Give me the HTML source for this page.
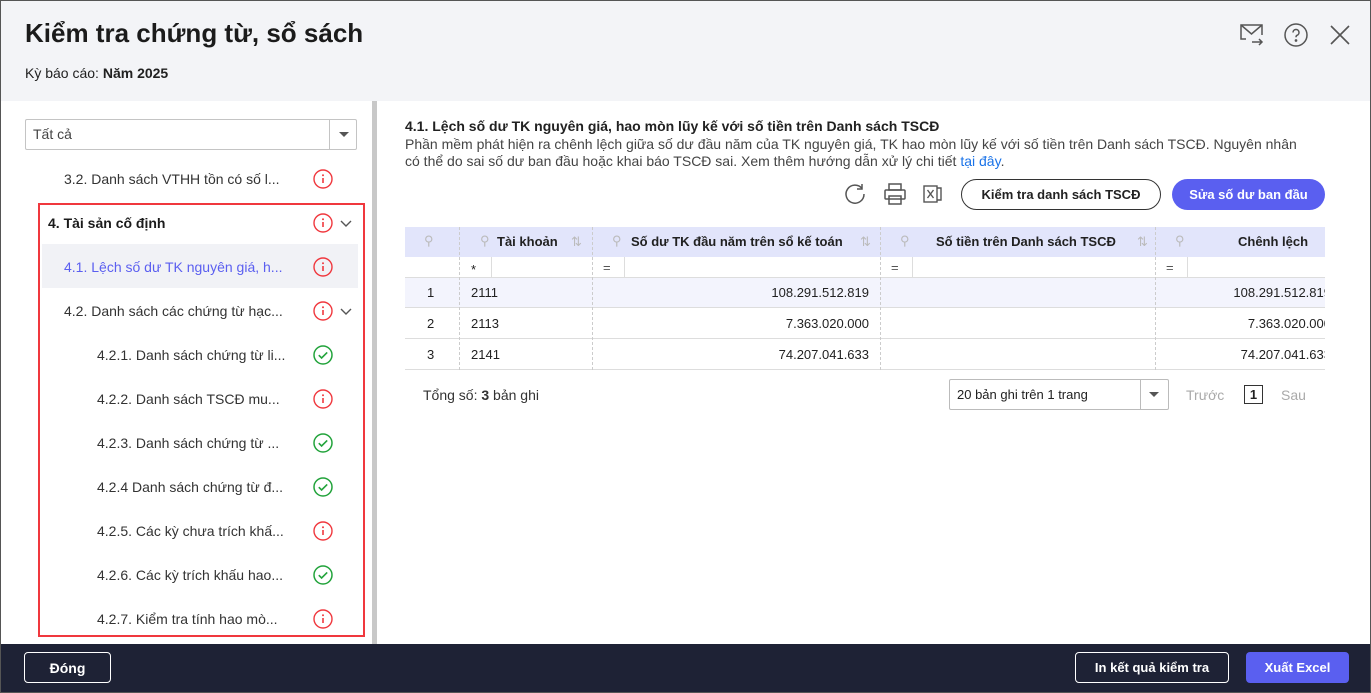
<!DOCTYPE html>
<html><head><meta charset="utf-8"><style>
*{box-sizing:border-box;margin:0;padding:0}
body{width:1371px;height:693px;overflow:hidden;font-family:"Liberation Sans",sans-serif;color:#212121;background:#fff;position:relative}
.hdr{position:absolute;left:0;top:0;width:1371px;height:101px;background:#f3f4f7}
.title{position:absolute;left:25px;top:18px;font-size:26px;font-weight:bold;color:#1b1b1b}
.sub{position:absolute;left:25px;top:65px;font-size:14px}
.foot{position:absolute;left:0;top:644px;width:1371px;height:49px;background:#1e2235}
.btn{position:absolute;border-radius:4px;font-size:14px;font-weight:bold;display:flex;align-items:center;justify-content:center}
.ab{position:absolute}
.item{position:absolute;font-size:14px;color:#333;white-space:nowrap}
.ic{position:absolute;width:20px;height:20px}
.cell{position:absolute;font-size:13px}
</style></head><body>
<div class="hdr"></div>
<div class="title">Kiểm tra chứng từ, sổ sách</div>
<div class="sub">Kỳ báo cáo: <b>Năm 2025</b></div>
<svg class="ab" style="left:1239px;top:23px" width="26" height="24" viewBox="0 0 26 24" fill="none" stroke="#555" stroke-width="1.5"><path d="M7 16H2V2h21v10"/><path d="M2 2l10.5 9L23 2"/><path d="M13 19h10M20 16l3 3-3 3"/></svg>
<svg class="ab" style="left:1284px;top:23px" width="24" height="24" viewBox="0 0 24 24" fill="none" stroke="#555" stroke-width="1.5"><circle cx="12" cy="12" r="11"/><path d="M9 9.5a3 3 0 1 1 4 2.8c-.8.4-1 1-1 2"/><circle cx="12" cy="17.5" r=".6" fill="#555"/></svg>
<svg class="ab" style="left:1330px;top:25px" width="20" height="20" viewBox="0 0 20 20" stroke="#555" stroke-width="1.6"><path d="M1 1l18 18M19 1L1 19"/></svg>

<div class="ab" style="left:372px;top:101px;width:5px;height:543px;background:#c8c8c8"></div>
<div class="ab" style="left:25px;top:119px;width:332px;height:31px;border:1px solid #c4c4c4;border-radius:2px"></div>
<div class="ab" style="left:329px;top:120px;width:1px;height:29px;background:#c4c4c4"></div>
<div class="item" style="left:33px;top:126px;color:#444">Tất cả</div>
<div class="ab" style="left:339px;top:132px;width:0;height:0;border-left:5px solid transparent;border-right:5px solid transparent;border-top:5px solid #555"></div>

<div class="ab" style="left:38px;top:203px;width:327px;height:434px;border:2px solid #f0383e"></div>
<div class="ab" style="left:42px;top:244px;width:316px;height:44px;background:#f1f2f6"></div>

<div class="item" style="left:64px;top:171px">3.2. Danh sách VTHH tồn có số l...</div>
<div class="item" style="left:48px;top:215px;font-weight:bold;color:#1b1b1b">4. Tài sản cố định</div>
<div class="item" style="left:64px;top:259px;color:#5b5ff0">4.1. Lệch số dư TK nguyên giá, h...</div>
<div class="item" style="left:64px;top:303px">4.2. Danh sách các chứng từ hạc...</div>
<div class="item" style="left:97px;top:347px">4.2.1. Danh sách chứng từ li...</div>
<div class="item" style="left:97px;top:391px">4.2.2. Danh sách TSCĐ mu...</div>
<div class="item" style="left:97px;top:435px">4.2.3. Danh sách chứng từ ...</div>
<div class="item" style="left:97px;top:479px">4.2.4 Danh sách chứng từ đ...</div>
<div class="item" style="left:97px;top:523px">4.2.5. Các kỳ chưa trích khấ...</div>
<div class="item" style="left:97px;top:567px">4.2.6. Các kỳ trích khấu hao...</div>
<div class="item" style="left:97px;top:611px">4.2.7. Kiểm tra tính hao mò...</div>

<svg width="0" height="0" style="position:absolute"><defs>
<g id="r"><circle cx="10" cy="10" r="9" fill="none" stroke="#f0383e" stroke-width="1.4"/><path d="M10 9v5" stroke="#f0383e" stroke-width="1.6"/><circle cx="10" cy="6.3" r="1" fill="#f0383e"/></g>
<g id="g"><circle cx="10" cy="10" r="9" fill="none" stroke="#22a33b" stroke-width="1.5"/><path d="M5.8 10.2l2.8 2.8 5.6-5.6" fill="none" stroke="#22a33b" stroke-width="1.6"/></g>
<g id="v"><path d="M1 1l5 5 5-5" fill="none" stroke="#555" stroke-width="1.4"/></g>
</defs></svg>
<svg class="ic" style="left:313px;top:169px"><use href="#r"/></svg>
<svg class="ic" style="left:313px;top:213px"><use href="#r"/></svg>
<svg class="ab" style="left:340px;top:220px" width="12" height="8"><use href="#v"/></svg>
<svg class="ic" style="left:313px;top:257px"><use href="#r"/></svg>
<svg class="ic" style="left:313px;top:301px"><use href="#r"/></svg>
<svg class="ab" style="left:340px;top:308px" width="12" height="8"><use href="#v"/></svg>
<svg class="ic" style="left:313px;top:345px"><use href="#g"/></svg>
<svg class="ic" style="left:313px;top:389px"><use href="#r"/></svg>
<svg class="ic" style="left:313px;top:433px"><use href="#g"/></svg>
<svg class="ic" style="left:313px;top:477px"><use href="#g"/></svg>
<svg class="ic" style="left:313px;top:521px"><use href="#r"/></svg>
<svg class="ic" style="left:313px;top:565px"><use href="#g"/></svg>
<svg class="ic" style="left:313px;top:609px"><use href="#r"/></svg>

<div class="ab" style="left:405px;top:118px;font-size:14px;font-weight:bold">4.1. Lệch số dư TK nguyên giá, hao mòn lũy kế với số tiền trên Danh sách TSCĐ</div>
<div class="ab" style="left:405px;top:136px;width:895px;font-size:14px;line-height:17px;color:#444">Phần mềm phát hiện ra chênh lệch giữa số dư đầu năm của TK nguyên giá, TK hao mòn lũy kế với số tiền trên Danh sách TSCĐ. Nguyên nhân có thể do sai số dư ban đầu hoặc khai báo TSCĐ sai. Xem thêm hướng dẫn xử lý chi tiết <span style="color:#1a73e8">tại đây</span>.</div>

<svg class="ab" style="left:843px;top:182px" width="24" height="24" viewBox="0 0 24 24" fill="none" stroke="#555" stroke-width="1.5"><path d="M19 6.5A9 9 0 1 0 21 12"/><path d="M19 2v5h-5"/></svg>
<svg class="ab" style="left:883px;top:182px" width="24" height="24" viewBox="0 0 24 24" fill="none" stroke="#555" stroke-width="1.5"><rect x="6" y="2" width="12" height="6"/><rect x="2" y="8" width="20" height="9" rx="1"/><rect x="6" y="14" width="12" height="8"/></svg>
<svg class="ab" style="left:922px;top:183px" width="22" height="22" viewBox="0 0 22 22" fill="none" stroke="#555" stroke-width="1.4"><rect x="2" y="3" width="13" height="16"/><path d="M15 5h4v12h-4"/><path d="M5.5 7l6 8M11.5 7l-6 8"/></svg>
<div class="btn" style="left:961px;top:179px;width:200px;height:31px;border:1px solid #333;border-radius:16px;font-weight:bold;font-size:13px;color:#222">Kiểm tra danh sách TSCĐ</div>
<div class="btn" style="left:1172px;top:179px;width:153px;height:31px;background:#5a5ff0;border-radius:16px;color:#fff;font-size:13px">Sửa số dư ban đầu</div>

<div class="ab" style="left:405px;top:227px;width:920px;height:30px;background:#e2e5fb"></div>
<div class="ab" style="left:405px;top:257px;width:920px;height:21px;border-bottom:1px solid #ddd"></div>
<div class="ab" style="left:405px;top:278px;width:920px;height:30px;background:#f3f4fd;border-bottom:1px solid #ddd"></div>
<div class="ab" style="left:405px;top:308px;width:920px;height:31px;border-bottom:1px solid #ddd"></div>
<div class="ab" style="left:405px;top:339px;width:920px;height:31px;border-bottom:1px solid #ddd"></div>
<div class="ab" style="left:459px;top:227px;width:1px;height:143px;border-left:1px dashed #ccc"></div>
<div class="ab" style="left:592px;top:227px;width:1px;height:143px;border-left:1px dashed #ccc"></div>
<div class="ab" style="left:880px;top:227px;width:1px;height:143px;border-left:1px dashed #ccc"></div>
<div class="ab" style="left:1155px;top:227px;width:1px;height:143px;border-left:1px dashed #ccc"></div>
<div class="ab" style="left:491px;top:257px;width:1px;height:21px;background:#ddd"></div>
<div class="ab" style="left:624px;top:257px;width:1px;height:21px;background:#ddd"></div>
<div class="ab" style="left:912px;top:257px;width:1px;height:21px;background:#ddd"></div>
<div class="ab" style="left:1187px;top:257px;width:1px;height:21px;background:#ddd"></div>

<div class="cell" style="left:424px;top:233px;color:#bbb">⚲</div>
<div class="cell" style="left:480px;top:233px;color:#bbb">⚲</div>
<div class="cell" style="left:497px;top:234px;font-weight:bold">Tài khoản</div>
<div class="cell" style="left:571px;top:234px;color:#bbb">⇅</div>
<div class="cell" style="left:612px;top:233px;color:#bbb">⚲</div>
<div class="cell" style="left:631px;top:234px;font-weight:bold">Số dư TK đầu năm trên sổ kế toán</div>
<div class="cell" style="left:860px;top:234px;color:#bbb">⇅</div>
<div class="cell" style="left:900px;top:233px;color:#bbb">⚲</div>
<div class="cell" style="left:936px;top:234px;font-weight:bold">Số tiền trên Danh sách TSCĐ</div>
<div class="cell" style="left:1137px;top:234px;color:#bbb">⇅</div>
<div class="cell" style="left:1175px;top:233px;color:#bbb">⚲</div>
<div class="cell" style="left:1238px;top:234px;font-weight:bold">Chênh lệch</div>

<div class="cell" style="left:471px;top:262px">*</div>
<div class="cell" style="left:603px;top:260px;color:#555">=</div>
<div class="cell" style="left:891px;top:260px;color:#555">=</div>
<div class="cell" style="left:1166px;top:260px;color:#555">=</div>

<div class="cell" style="left:427px;top:285px">1</div><div class="cell" style="left:471px;top:285px">2111</div>
<div class="cell" style="left:600px;top:285px;width:269px;text-align:right">108.291.512.819</div>
<div class="cell" style="left:1160px;top:285px;width:171px;text-align:right">108.291.512.819</div>
<div class="cell" style="left:427px;top:316px">2</div><div class="cell" style="left:471px;top:316px">2113</div>
<div class="cell" style="left:600px;top:316px;width:269px;text-align:right">7.363.020.000</div>
<div class="cell" style="left:1160px;top:316px;width:171px;text-align:right">7.363.020.000</div>
<div class="cell" style="left:427px;top:347px">3</div><div class="cell" style="left:471px;top:347px">2141</div>
<div class="cell" style="left:600px;top:347px;width:269px;text-align:right">74.207.041.633</div>
<div class="cell" style="left:1160px;top:347px;width:171px;text-align:right">74.207.041.633</div>
<div class="ab" style="left:1325px;top:220px;width:46px;height:160px;background:#fff"></div>

<div class="cell" style="left:423px;top:387px;font-size:14px;color:#333">Tổng số: <b>3</b> bản ghi</div>
<div class="ab" style="left:949px;top:379px;width:220px;height:31px;border:1px solid #bbb;border-radius:2px"></div>
<div class="ab" style="left:1140px;top:380px;width:1px;height:29px;background:#bbb"></div>
<div class="cell" style="left:957px;top:387px">20 bản ghi trên 1 trang</div>
<div class="ab" style="left:1149px;top:392px;border-left:5px solid transparent;border-right:5px solid transparent;border-top:5px solid #555"></div>
<div class="cell" style="left:1186px;top:387px;color:#aaa;font-size:14px">Trước</div>
<div class="ab" style="left:1244px;top:385px;width:19px;height:19px;border:1px solid #333;font-size:13px;font-weight:bold;text-align:center;line-height:17px">1</div>
<div class="cell" style="left:1281px;top:387px;color:#aaa;font-size:14px">Sau</div>

<div class="foot"></div>
<div class="btn" style="left:24px;top:652px;width:87px;height:31px;border:1px solid #fff;color:#fff">Đóng</div>
<div class="btn" style="left:1075px;top:652px;width:154px;height:31px;border:1px solid #fff;color:#fff;font-size:13px">In kết quả kiểm tra</div>
<div class="btn" style="left:1246px;top:652px;width:103px;height:31px;background:#5a5ff0;color:#fff;font-size:13px">Xuất Excel</div>
<div class="ab" style="left:0;top:0;width:1371px;height:693px;border:1px solid #555"></div>
</body></html>
